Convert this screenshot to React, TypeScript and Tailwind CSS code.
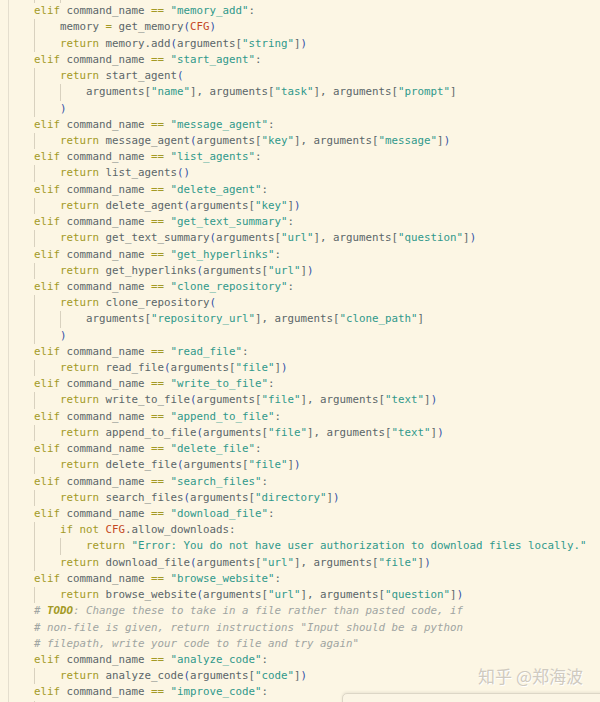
import type { ReactNode } from 'react'

// [indent level, source text]; level 1 is the elif column
const LINES: [number, string][] = [
  [3, ''],
  [1, 'elif command_name == "memory_add":'],
  [2, 'memory = get_memory(CFG)'],
  [2, 'return memory.add(arguments["string"])'],
  [1, 'elif command_name == "start_agent":'],
  [2, 'return start_agent('],
  [3, 'arguments["name"], arguments["task"], arguments["prompt"]'],
  [2, ')'],
  [1, 'elif command_name == "message_agent":'],
  [2, 'return message_agent(arguments["key"], arguments["message"])'],
  [1, 'elif command_name == "list_agents":'],
  [2, 'return list_agents()'],
  [1, 'elif command_name == "delete_agent":'],
  [2, 'return delete_agent(arguments["key"])'],
  [1, 'elif command_name == "get_text_summary":'],
  [2, 'return get_text_summary(arguments["url"], arguments["question"])'],
  [1, 'elif command_name == "get_hyperlinks":'],
  [2, 'return get_hyperlinks(arguments["url"])'],
  [1, 'elif command_name == "clone_repository":'],
  [2, 'return clone_repository('],
  [3, 'arguments["repository_url"], arguments["clone_path"]'],
  [2, ')'],
  [1, 'elif command_name == "read_file":'],
  [2, 'return read_file(arguments["file"])'],
  [1, 'elif command_name == "write_to_file":'],
  [2, 'return write_to_file(arguments["file"], arguments["text"])'],
  [1, 'elif command_name == "append_to_file":'],
  [2, 'return append_to_file(arguments["file"], arguments["text"])'],
  [1, 'elif command_name == "delete_file":'],
  [2, 'return delete_file(arguments["file"])'],
  [1, 'elif command_name == "search_files":'],
  [2, 'return search_files(arguments["directory"])'],
  [1, 'elif command_name == "download_file":'],
  [2, 'if not CFG.allow_downloads:'],
  [3, 'return "Error: You do not have user authorization to download files locally."'],
  [2, 'return download_file(arguments["url"], arguments["file"])'],
  [1, 'elif command_name == "browse_website":'],
  [2, 'return browse_website(arguments["url"], arguments["question"])'],
  [1, '# TODO: Change these to take in a file rather than pasted code, if'],
  [1, '# non-file is given, return instructions "Input should be a python'],
  [1, '# filepath, write your code to file and try again"'],
  [1, 'elif command_name == "analyze_code":'],
  [2, 'return analyze_code(arguments["code"])'],
  [1, 'elif command_name == "improve_code":'],
  [2, ''],
]

const TOKEN = /"[^"]*"|\b(?:elif|return|if|not)\b|==|=|[()]|\bCFG\b/g

function tokenClass(tok: string) {
  if (tok.startsWith('"')) return 'text-[#30998b]'
  if (tok === '(' || tok === ')') return 'text-[#3451a6]'
  if (tok === 'CFG') return 'text-[#c4481f]'
  return 'text-[#a39a26]'
}

function highlight(src: string): ReactNode[] {
  if (src.startsWith('# TODO')) {
    return [
      <span key="h" className="italic text-[#a0a5a2]">#{' '}</span>,
      <span key="t" className="italic font-bold text-[#a39a26]">TODO</span>,
      <span key="r" className="italic text-[#a0a5a2]">{src.slice(6)}</span>,
    ]
  }
  if (src.startsWith('#')) {
    return [<span key="c" className="italic text-[#a0a5a2]">{src}</span>]
  }
  const out: ReactNode[] = []
  let last = 0
  for (const m of src.matchAll(TOKEN)) {
    const i = m.index ?? 0
    if (i > last) out.push(<span key={last}>{src.slice(last, i)}</span>)
    out.push(
      <span key={i} className={tokenClass(m[0])}>
        {m[0]}
      </span>
    )
    last = i + m[0].length
  }
  if (last < src.length) out.push(<span key={last}>{src.slice(last)}</span>)
  return out
}

function CodeLine({ indent, src }: { indent: number; src: string }) {
  return (
    <div className="flex h-[16.22px] shrink-0">
      {Array.from({ length: indent }, (_, i) => (
        <div
          key={i}
          className={
            i === 0
              ? 'w-[26px] shrink-0 shadow-[inset_1px_0_0_#e4dece]'
              : 'w-[26px] shrink-0 shadow-[inset_1px_0_0_#d8d1bf]'
          }
        />
      ))}
      <span className="whitespace-pre leading-[16.22px]">{highlight(src)}</span>
    </div>
  )
}

export default function App() {
  return (
    <div className="relative w-[600px] h-[702px] overflow-hidden bg-[#fcf6e4] font-['DejaVu_Sans_Mono',monospace] text-[10.8px] text-[#5b6669]">
      <div className="flex flex-col pl-[8px] -mt-[13px]">
        {LINES.map(([indent, src], i) => (
          <CodeLine key={i} indent={indent} src={src} />
        ))}
      </div>

      <div className="absolute right-[17px] top-[667px] font-['Noto_Sans_CJK_SC',sans-serif] text-[17px] leading-none text-[#cfcac0] [text-shadow:1px_1px_0_#ffffff]">
        知乎 @郑海波
      </div>

      <div className="absolute left-[342px] top-[693px] w-[270px] h-[20px] rounded-tl-[5px] border border-[#dcd6c6] bg-[#fbf5e5] shadow-[0_-1px_3px_rgba(0,0,0,0.08)]" />
    </div>
  )
}
